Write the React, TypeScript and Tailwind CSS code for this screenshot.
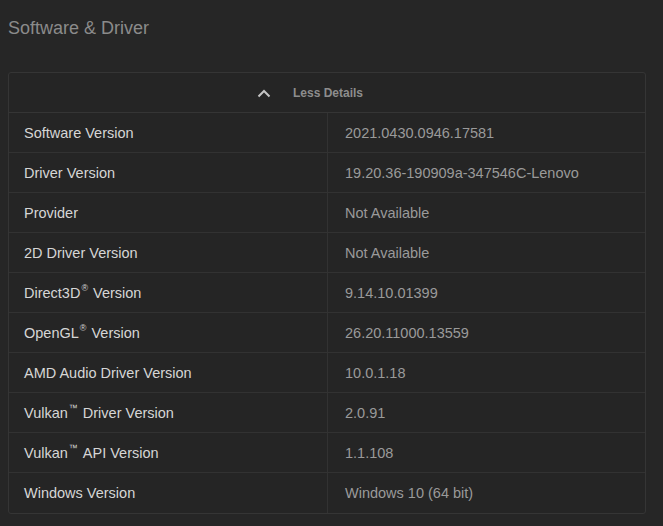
import React from "react";

const rows: [string, string][] = [
  ["Software Version", "2021.0430.0946.17581"],
  ["Driver Version", "19.20.36-190909a-347546C-Lenovo"],
  ["Provider", "Not Available"],
  ["2D Driver Version", "Not Available"],
  ["Direct3D® Version", "9.14.10.01399"],
  ["OpenGL® Version", "26.20.11000.13559"],
  ["AMD Audio Driver Version", "10.0.1.18"],
  ["Vulkan™ Driver Version", "2.0.91"],
  ["Vulkan™ API Version", "1.1.108"],
  ["Windows Version", "Windows 10 (64 bit)"],
];

function Label({ text }: { text: string }) {
  const m = text.match(/^(.*?)([®™])\s(.*)$/);
  if (!m) return <>{text}</>;
  return (
    <>
      {m[1]}
      <span className="text-[9px] relative top-[-5px] ml-[1px] mr-[5px]">{m[2]}</span>
      {m[3]}
    </>
  );
}

export default function App() {
  return (
    <div
      className="w-[663px] h-[526px] bg-[#262626] overflow-hidden"
      style={{ fontFamily: '"Liberation Sans", Arial, sans-serif' }}
    >
      <div className="pl-[8px] pt-[16px] h-[72px]">
        <h1 className="text-[18px] leading-[24px] text-[#8b8b8b]">Software &amp; Driver</h1>
      </div>
      <div className="ml-[8px] w-[638px] border border-[#353535] rounded-[3px] bg-[#252525]">
        <div className="h-[40px] flex items-center justify-center border-b border-[#353535] gap-[22px] pr-[34px] pt-[1px]">
          <svg width="14" height="9" viewBox="0 0 14 9" fill="none">
            <path d="M1.5 7.5 L7 2 L12.5 7.5" stroke="#c4c4c4" strokeWidth="2" />
          </svg>
          <span className="text-[12px] font-bold text-[#8d8d8d]">Less Details</span>
        </div>
        {rows.map(([k, v], i) => (
          <div
            key={k}
            className={`grid grid-cols-[319px_1fr] h-[40px] ${i < rows.length - 1 ? "border-b border-[#323232]" : ""}`}
          >
            <div className="flex items-center pl-[15px] pt-[2px] border-r border-[#323232] text-[14.5px] text-[#d6d6d6] whitespace-pre">
              <Label text={k} />
            </div>
            <div className="flex items-center pl-[17px] pt-[2px] text-[14.5px] text-[#9a9a9a]">{v}</div>
          </div>
        ))}
      </div>
    </div>
  );
}
